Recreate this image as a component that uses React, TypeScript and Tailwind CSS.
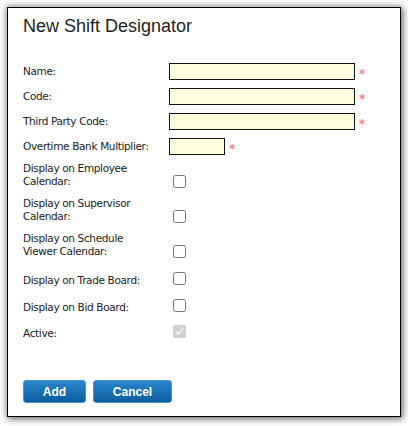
import { useState } from 'react'

const textFields = [
  { label: 'Name:', width: 'w-[186px]' },
  { label: 'Code:', width: 'w-[186px]' },
  { label: 'Third Party Code:', width: 'w-[186px]' },
  { label: 'Overtime Bank Multiplier:', width: 'w-[56px]' },
]

const twoLine = [
  ['Display on Employee', 'Calendar:'],
  ['Display on Supervisor', 'Calendar:'],
  ['Display on Schedule', 'Viewer Calendar:'],
]

const oneLine = ['Display on Trade Board:', 'Display on Bid Board:']

export default function App() {
  const [values, setValues] = useState<Record<string, string>>({})
  const [checks, setChecks] = useState<Record<string, boolean>>({})

  return (
    <div className="w-[408px] h-[426px] bg-white pt-[7px] pl-[7px]">
      <div className="w-[394px] h-[410px] border border-black bg-white shadow-[1px_1px_7px_1px_rgba(0,0,0,0.6)] pt-[8px] pl-[15px] text-[#222] font-['DejaVu_Sans',sans-serif] text-[10.5px] tracking-[-0.35px]">
        <h1 className="font-['Liberation_Sans',Arial,sans-serif] text-[18px] leading-[21px] tracking-normal text-[#1e1e1e]">New Shift Designator</h1>

        <div className="mt-[22px]">
          {textFields.map(f => (
            <div key={f.label} className="flex items-center h-[25px]">
              <label className="w-[146px] whitespace-nowrap leading-[13px]">{f.label}</label>
              <input
                value={values[f.label] || ''}
                onChange={e => setValues({ ...values, [f.label]: e.target.value })}
                className={`${f.width} h-[17px] border border-[#111] bg-[#ffffe0] outline-none px-1`}
              />
              <span className="ml-[4px] text-[#f08878] font-bold text-[12px] leading-none mt-[4px]">*</span>
            </div>
          ))}

          {twoLine.map(([a, b]) => (
            <div key={a + b} className="flex items-start h-[35px]">
              <label className="w-[146px] whitespace-nowrap leading-[13px] mt-[3px]">
                {a}
                <br />
                {b}
              </label>
              <input
                type="checkbox"
                checked={!!checks[a + b]}
                onChange={e => setChecks({ ...checks, [a + b]: e.target.checked })}
                className="ml-[4px] mt-[16px] w-[13px] h-[13px]"
              />
            </div>
          ))}

          <div className="h-[2px]" />

          {oneLine.map(l => (
            <div key={l} className="flex items-start h-[27px]">
              <label className="w-[146px] whitespace-nowrap leading-[13px] mt-[8px]">{l}</label>
              <input
                type="checkbox"
                checked={!!checks[l]}
                onChange={e => setChecks({ ...checks, [l]: e.target.checked })}
                className="ml-[4px] mt-[6px] w-[13px] h-[13px]"
              />
            </div>
          ))}
          <div className="flex items-start h-[27px]">
            <label className="w-[146px] whitespace-nowrap leading-[13px] mt-[7px]">Active:</label>
            <input type="checkbox" checked disabled readOnly className="ml-[4px] mt-[5px] w-[13px] h-[13px]" />
          </div>
        </div>

        <div className="flex gap-[7px] mt-[33px] font-['Liberation_Sans',Arial,sans-serif] font-bold text-[12px] tracking-normal text-white">
          <button className="w-[63px] h-[23px] rounded-[3px] border border-[#4b93cf] bg-linear-to-b from-[#2b86cc] to-[#0b5c9f]">Add</button>
          <button className="w-[79px] h-[23px] rounded-[3px] border border-[#4b93cf] bg-linear-to-b from-[#2b86cc] to-[#0b5c9f]">Cancel</button>
        </div>
      </div>
    </div>
  )
}
